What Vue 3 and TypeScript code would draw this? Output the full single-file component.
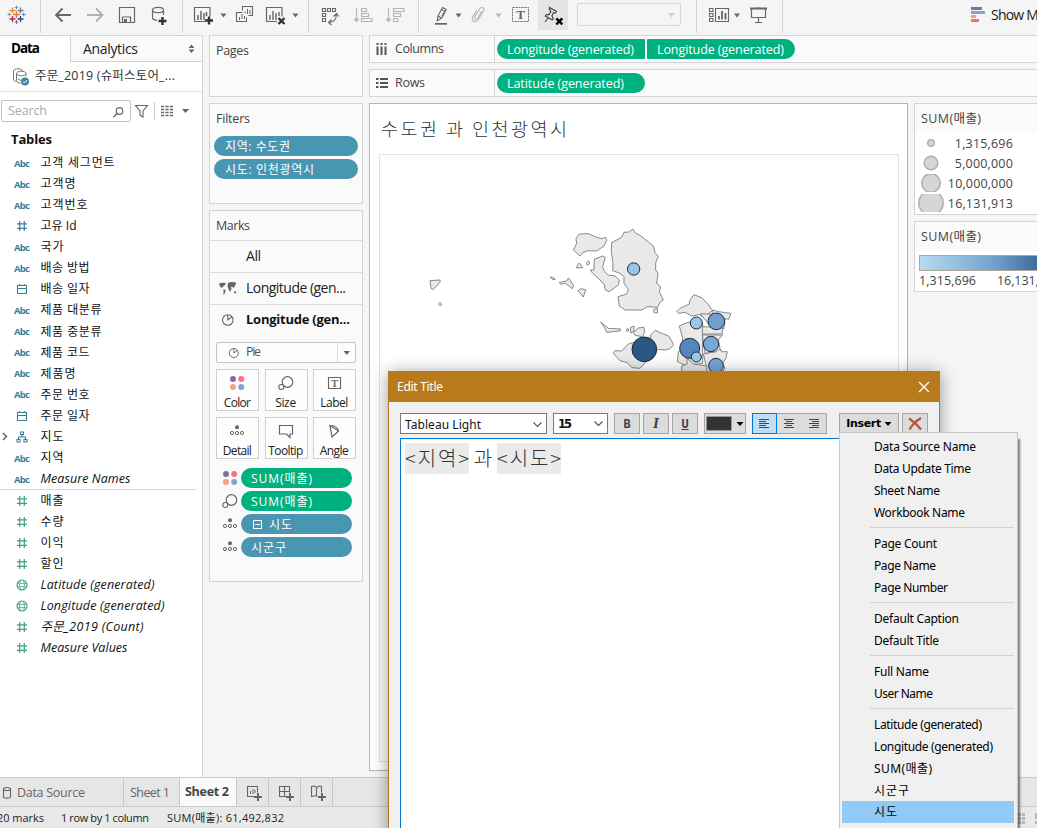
<script setup lang="ts">
import { h } from 'vue'
import type { Directive, FunctionalComponent } from 'vue'

type Shape = { d?: string; f?: string; s?: string; w?: number; dash?: string; c?: number[]; t?: string; at?: number[] }
type Icon = { box: [number, number, number, number]; shapes: Shape[] }

const G = '#666666'
const L = '#b4b4b4'
const caret = (x: number, y: number, f = G): Shape => ({ d: `M${x - 2.5} ${y - 1.5}h6l-3 4z`, f })
const plus = (x: number, y: number, r = 4, s = '#333', w = 2.4): Shape => ({ d: `M${x - r} ${y}h${2 * r}M${x} ${y - r}v${2 * r}`, s, w })
const cross = (x: number, y: number, s = '#333'): Shape => ({ d: `M${x - 3} ${y - 3}l6 6M${x + 3} ${y - 3}l-6 6`, s, w: 2.4 })

const icons: Record<string, Icon> = {
  logo: { box: [0, 0, 40, 33], shapes: [
    plus(16.5, 14.5, 3.5, '#e8762c', 1.4), plus(12.5, 10.5, 3, '#eb912c', 1.3), plus(20.5, 10.5, 3, '#5b879b', 1.3),
    plus(12.5, 19, 3, '#c72035', 1.3), plus(20.5, 19, 3, '#1f4a86', 1.3), plus(16.5, 7.5, 1.8, '#7199a6', 1),
    plus(16.5, 22, 1.8, '#5c6692', 1), plus(9.3, 14.5, 1.8, '#7199a6', 1), plus(23.7, 14.5, 1.8, '#6d79a8', 1)] },
  back: { box: [47, 0, 32, 33], shapes: [{ d: 'M71 15H56M62.5 8.5L56 15l6.5 6.5', s: G, w: 1.8 }] },
  forward: { box: [79, 0, 32, 33], shapes: [{ d: 'M87 15h15M96 8.5l6.5 6.5-6.5 6.5', s: '#b0b0b0', w: 1.8 }] },
  save: { box: [111, 0, 32, 33], shapes: [{ d: 'M119.5 7.5h15v15h-15zM122.5 22v-5h8v5', s: G, w: 1.2 }, { d: 'M124 19h3v4h-3z', f: G }] },
  database: { box: [143, 0, 39, 33], shapes: [{ d: 'M152.5 10c0-3.6 11-3.6 11 0s-11 3.6-11 0v8c0 1.2 2 2.1 4.5 2.3M163.5 10v5', s: G, w: 1.2 }, plus(162.5, 21)] },
  newSheet: { box: [183, 0, 34, 33], shapes: [{ d: 'M205 21.500h-10.500v-14h15.500v9', s: G, w: 1.2 }, { d: 'M198 15v5M201 11v9M204 13v7M206.500 12v4', s: G, w: 1.5 }, plus(209, 20.5)] },
  caretA: { box: [217, 0, 13, 33], shapes: [caret(223, 15)] },
  duplicate: { box: [230, 0, 30, 33], shapes: [{ d: 'M242.500 10.500v-4h10v9h-4M240 12.500h-3.500v9h10v-4M242.500 12.500h-3', s: G, w: 1.1 }, { d: 'M245 11.500v2M247.500 9v5M250 10v4M239.500 17v3M242 14v5M244.500 16v3', s: G, w: 1 }] },
  clear: { box: [260, 0, 30, 33], shapes: [{ d: 'M277 21.500h-10.500v-14h15.500v9', s: G, w: 1.2 }, { d: 'M270 15v5M273 11v9M276 13v7M279 12v4', s: G, w: 1.4 }, cross(281.5, 21)] },
  caretB: { box: [290, 0, 18, 33], shapes: [caret(295, 15)] },
  swap: { box: [309, 0, 36, 33], shapes: [{ d: 'M322.500 8.500h3v3h-3zM327.500 8.500h3v3h-3zM332.500 8.500h3v3h-3zM322.500 13.500h3v3h-3zM322.500 18.500h3v3h-3zM329 22.500q7-.5 7.500-8M333.500 16.500l3-3 2.500 3M331.500 19.500l-3 3 3 2.500', s: G, w: 1.1 }] },
  ascending: { box: [345, 0, 33, 33], shapes: [{ d: 'M356.500 8v12M361.500 8.500h5v3h-5zM361.500 13.500h7v3h-7zM361.500 18.500h10.500v3h-10.500z', s: L, w: 1.1 }, { d: 'M353.500 18.500h6l-3 4z', f: L }] },
  descending: { box: [378, 0, 40, 33], shapes: [{ d: 'M388.500 8v12M393.500 8.500h10.500v3h-10.500zM393.500 13.500h7v3h-7zM393.500 18.500h4.500v3h-4.500z', s: L, w: 1.1 }, { d: 'M385.500 18.500h6l-3 4z', f: L }] },
  pen: { box: [419, 0, 32, 33], shapes: [{ d: 'M438 16l4.500-8.500 3.800 2-4.600 8.700-4.500 2.500zM441.500 9.500l3.800 2M438 16l3.600 2.200M442 16l3-5.500', s: G, w: 1.1 }, { d: 'M435 23h12v1.700h-12z', f: G }] },
  caretC: { box: [451, 0, 15, 33], shapes: [caret(458, 15)] },
  clip: { box: [466, 0, 24, 33], shapes: [{ d: 'M482 11l-4.500 7.500c-1.500 2.200-4 .5-2.800-1.500l4.800-8c2-3 5.500-1 4 2l-5.500 9c-2.500 3.500-7.500 1-5.300-3l4-6.500', s: L, w: 1.1 }] },
  caretD: { box: [490, 0, 17, 33], shapes: [caret(498, 15, L)] },
  textBox: { box: [507, 0, 30, 33], shapes: [{ d: 'M512.500 7.500h16v14h-16z', s: G, w: 1, dash: '2 1' }, { t: 'T', at: [520.500, 19.300, 13], f: G }] },
  pin: { box: [538, 0, 30, 30], shapes: [{ d: 'M549.500 7.500l7 4-1.200 1.500-1.800-.4-1.500 3.200 1.200 3-1 1.200-6.800-4 1-1.500 2.700.1 1.700-3-1.500-2.500zM548.500 17.500l-3.500 4.500', s: '#444', w: 1.2 }, cross(559.3, 21.3, '#000')] },
  combo: { box: [661, 3, 19, 23], shapes: [{ d: 'M668 13h7l-3.500 4.500z', f: '#cfcfcf' }] },
  cards: { box: [697, 0, 35, 33], shapes: [{ d: 'M709.500 8.500h3.500v3h-3.500zM709.500 13.500h3.500v3h-3.500zM709.500 18.500h3.500v3h-3.500zM715.500 8.500h13v13h-13z', s: G, w: 1.1 }, { d: 'M719 16v3.500M722 11v8.500M725.500 13v6.500', s: G, w: 1.8 }] },
  caretE: { box: [732, 0, 12, 33], shapes: [caret(736.5, 15)] },
  present: { box: [744, 0, 38, 33], shapes: [{ d: 'M750 8.500h17', s: G, w: 2 }, { d: 'M751.500 9v8.500h14V9M758.500 18v4.500M755 22.500h7M758.500 7v2', s: G, w: 1.2 }] },
  showMe: { box: [971, 0, 20, 33], shapes: [{ d: 'M971 7h11v3h-11z', f: '#85709b' }, { d: 'M971 11h14v3h-14z', f: '#7fa5cf' }, { d: 'M971 15h5v3h-5z', f: '#f2a479' }, { d: 'M971 19h8v3h-8z', f: '#fb6a7b' }] },

  sorter: { box: [185, 40, 14, 16], shapes: [{ d: 'M189.500 47l3-3.500 3 3.500zM189.500 48.500h6l-3 3.500z', f: G }] },
  source: { box: [12, 66, 20, 20], shapes: [{ d: 'M13.500 70c0-3 9-3 9 0M13.500 70v8c0 1.500 1.500 2.500 3 2.700M16.500 72.500c0-3 9.500-3 9.500 0s-9.500 3-9.500 0v7c0 1.500 1.500 2.500 4 2.500M26 72.500v3M18 78l3 1.500', s: '#777', w: 1 }, { c: [25, 80.500, 4], f: '#3f87a6' }, { d: 'M23 80.500l1.500 1.500 2.600-3', s: '#fff', w: 1 }] },
  search: { box: [112, 103, 16, 16], shapes: [{ c: [119.5, 110, 3.300], s: G, w: 1.2 }, { d: 'M117 112.500l-3.500 3.500', s: G, w: 1.5 }] },
  filter: { box: [133, 102, 18, 18], shapes: [{ d: 'M135.500 105.500h12l-4.500 5.500v6l-3-1.800V111z', s: G, w: 1.1 }] },
  list: { box: [158, 102, 18, 18], shapes: [106.5, 109.5, 112.5, 115.5].map((y) => ({ d: `M160 ${y}h12`, s: G, w: 1.5, dash: '3.200 1.200' })) },
  caretF: { box: [178, 102, 14, 18], shapes: [{ d: 'M183 109h7l-3.500 4z', f: G }] },

  hash: { box: [0, 0, 14, 14], shapes: [{ d: 'M2 4.800h10M2 9.300h10M4.700 2v10M9.300 2v10', s: 'currentColor', w: 1.2 }] },
  calendar: { box: [0, 0, 14, 14], shapes: [{ d: 'M2.500 3.500h9v8h-9zM2.500 6.500h9M4.700 2v2M9.300 2v2', s: 'currentColor', w: 1.1 }] },
  tree: { box: [0, 0, 14, 14], shapes: [{ d: 'M5.500 2h3v2.500h-3zM2 9.500h3v2.500H2zM9 9.500h3v2.500H9zM7 4.500v2.500M3.500 9.500V7h7v2.500', s: 'currentColor', w: 1.1 }] },
  globe: { box: [0, 0, 14, 14], shapes: [{ c: [7, 7, 5], s: 'currentColor', w: 1.1 }, { d: 'M2 5.300h10M2 8.700h10M5.800 2c-1.700 3-1.700 7 0 10M8.200 2c1.700 3 1.700 7 0 10', s: 'currentColor', w: 0.8 }] },

  columns: { box: [375, 41, 14, 14], shapes: [{ d: 'M377.500 42v2M381.500 42v2M385.500 42v2M377.500 45.500V54M381.500 45.500V54M385.500 45.500V54', s: '#555', w: 2 }] },
  rows: { box: [375, 75, 14, 14], shapes: [{ d: 'M376 78h2.500M376 82h2.500M376 86h2.500M380 78h8M380 82h8M380 86h8', s: '#555', w: 1.8 }] },
  map: { box: [218, 279, 20, 18], shapes: [{ d: 'M219 283.500l3-.8 4 .3-1 2-2 1.500-1 1.500-2-1.500zM223.500 289l2 1-.5 3-1.500 2zM228 283l3-1 5 .5-.5 2.500-2 3-1.500-1.500-1 .5.500 2-1.500 3-1.500-3-1-2.500zM234.500 291l2 1-1 1.500-1.500-.5z', f: '#666' }] },
  pie: { box: [221, 313, 14, 14], shapes: [{ c: [227.8, 320, 5.300], s: G, w: 1.1 }, { d: 'M227.800 314.700v5.300l4-3', s: G, w: 1.1 }] },
  color: { box: [228, 374, 18, 18], shapes: [{ c: [233, 379, 3], f: '#83709c' }, { c: [241.2, 379, 3], f: '#fa7284' }, { c: [233, 387, 3], f: '#f2a379' }, { c: [241.2, 387, 3], f: '#82a5cf' }] },
  size: { box: [277, 374, 18, 18], shapes: [{ c: [287.500, 382, 5.300], s: G, w: 1.2 }, { c: [281.300, 387, 2.500], s: G, w: 1.1, f: '#fafafa' }] },
  label: { box: [324, 374, 18, 18], shapes: [{ d: 'M327.500 377.500h12v11h-12z', s: G, w: 1.1 }, { t: 'T', at: [333.500, 386.500, 10], f: G }] },
  detail: { box: [228, 423, 18, 18], shapes: [{ c: [237, 428.300, 2], f: G }, { c: [232, 434, 1.600], s: G, w: 1 }, { c: [237, 434, 1.600], s: G, w: 1 }, { c: [242, 434, 1.600], s: G, w: 1 }] },
  tooltip: { box: [277, 422, 18, 18], shapes: [{ d: 'M279.500 425.500h13v8.500h-2.500v3.500l-3.500-3.500h-7z', s: G, w: 1.2 }] },
  angle: { box: [325, 421, 18, 18], shapes: [{ d: 'M330 424.500l2 11.500 6.500-6zM330 424.500c4 0 7.500 2 8.500 5.500', s: G, w: 1.2 }] },
  caretG: { box: [338, 343, 17, 19], shapes: [{ d: 'M343.500 351h6.500l-3.200 4z', f: G }] },

  dsource: { box: [1, 785, 12, 14], shapes: [{ d: 'M3.500 788c0-2 7-2 7 0s-7 2-7 0v8c0 1.500 7 1.500 7 0v-8', s: G, w: 1.1 }] },
  addSheet: { box: [236, 778, 31, 28], shapes: [{ d: 'M254 796.500h-7.500v-10h10v6', s: G, w: 1.1 }, { d: 'M249.500 791v3M252 789v5M254 790v3', s: G, w: 1 }, plus(257, 797, 4, G, 2)] },
  addDash: { box: [268, 778, 31, 28], shapes: [{ d: 'M285 796.500h-6.500v-10h10v6M278.500 791.500h10M283.500 786.500v10', s: G, w: 1.1 }, plus(289, 797, 4, G, 2)] },
  addStory: { box: [300, 778, 31, 28], shapes: [{ d: 'M316 796.500l-1-1-4.500 1v-10l3-.5 2 1.500v8.500M315.500 787.500l2.500-1.500 2.500.5v6', s: G, w: 1.1 }, plus(321, 797, 4, G, 2)] },

  close: { box: [914, 376, 20, 20], shapes: [{ d: 'M919 381l10 10M929 381l-10 10', s: '#fff', w: 1.3 }] },
  chevron: { box: [0, 0, 12, 10], shapes: [{ d: 'M1.500 2.500l4 4 4-4', s: '#555', w: 1.2 }] },
  blackCaret: { box: [0, 0, 8, 6], shapes: [{ d: 'M.5 1h7L4 5z', f: '#000' }] },
  alignLeft: { box: [0, 0, 12, 12], shapes: [{ d: 'M1 1.500h10M1 3.500h7M1 5.500h10M1 7.500h7M1 9.500h10', s: '#3d4752', w: 1 }] },
  alignCenter: { box: [0, 0, 12, 12], shapes: [{ d: 'M1 1.500h10M3 3.500h6M1 5.500h10M3 7.500h6M1 9.500h10', s: '#3d4752', w: 1 }] },
  alignRight: { box: [0, 0, 12, 12], shapes: [{ d: 'M1 1.500h10M4 3.500h7M1 5.500h10M4 7.500h7M1 9.500h10', s: '#3d4752', w: 1 }] },
  remove: { box: [0, 0, 16, 14], shapes: [{ d: 'M2 1.500c5 3 9 7 12 11M14 1C9 4 5 8 2.500 12.500', s: '#b8533a', w: 2.2 }] },
}

/* Renders one glyph; every icon keeps its own drawing window. */
const Glyph: FunctionalComponent<{ name: string }> = ({ name }) => {
  const { box, shapes } = icons[name]
  return h('svg', { width: box[2], height: box[3], viewBox: box.join(' ') }, shapes.map((p) => {
    const paint = { fill: p.f ?? 'none', stroke: p.s ?? 'none', 'stroke-width': p.w, 'stroke-dasharray': p.dash }
    if (p.c) return h('circle', { cx: p.c[0], cy: p.c[1], r: p.c[2], ...paint })
    if (p.t && p.at) return h('text', { x: p.at[0], y: p.at[1], 'font-size': p.at[2], 'font-weight': 700, 'font-family': 'Liberation Serif, serif', 'text-anchor': 'middle', fill: p.f }, p.t)
    return h('path', { d: p.d, ...paint })
  }))
}
Glyph.props = ['name']

/* Tracks a label out (or in) so that it fills the given width. */
const vFit: Directive<HTMLElement, number> = {
  mounted(el, { value }) {
    const range = document.createRange()
    range.selectNodeContents(el)
    const natural = range.getBoundingClientRect().width
    const count = Math.max((el.textContent ?? '').length - 1, 1)
    el.style.letterSpacing = `${(value - natural) / count}px`
  },
}

const toolbar: string[][] = [
  ['logo'],
  ['back', 'forward', 'save', 'database'],
  ['newSheet', 'caretA', 'duplicate', 'clear', 'caretB'],
  ['swap', 'ascending', 'descending'],
]

type Field = [icon: string, name: string, width: number, italic?: boolean]
const dimensions: Field[] = [
  ['Abc', '고객 세그먼트', 74], ['Abc', '고객명', 35], ['Abc', '고객번호', 47], ['hash', '고유 Id', 36],
  ['Abc', '국가', 23], ['Abc', '배송 방법', 49], ['calendar', '배송 일자', 49], ['Abc', '제품 대분류', 61],
  ['Abc', '제품 중분류', 61], ['Abc', '제품 코드', 49], ['Abc', '제품명', 35], ['Abc', '주문 번호', 49],
  ['calendar', '주문 일자', 49], ['tree', '지도', 23], ['Abc', '지역', 23], ['Abc', 'Measure Names', 90, true],
]
const measures: Field[] = [
  ['hash', '매출', 23], ['hash', '수량', 23], ['hash', '이익', 23], ['hash', '할인', 23],
  ['globe', 'Latitude (generated)', 114, true], ['globe', 'Longitude (generated)', 124, true],
  ['hash', '주문_2019 (Count)', 103, true], ['hash', 'Measure Values', 87, true],
]

const markButtons: [string, string, number][] = [
  ['color', 'Color', 27], ['size', 'Size', 21], ['label', 'Label', 28],
  ['detail', 'Detail', 29], ['tooltip', 'Tooltip', 35], ['angle', 'Angle', 29],
]
const markPills = [
  { icon: 'color', text: 'SUM(매출)', width: 61, kind: 'green' },
  { icon: 'size', text: 'SUM(매출)', width: 61, kind: 'green' },
  { icon: 'detail', text: '시도', width: 23, kind: 'blue', box: true },
  { icon: 'detail', text: '시군구', width: 35, kind: 'blue' },
]

const sizes: [string, number, number][] = [['1,315,696', 3.3, 58], ['5,000,000', 6.8, 58], ['10,000,000', 9.3, 65], ['16,131,913', 12.2, 65]]

const menu: [string, number][][] = [
  [['Data Source Name', 102], ['Data Update Time', 97], ['Sheet Name', 66], ['Workbook Name', 91]],
  [['Page Count', 63], ['Page Name', 62], ['Page Number', 74]],
  [['Default Caption', 85], ['Default Title', 65]],
  [['Full Name', 55], ['User Name', 59]],
  [['Latitude (generated)', 108], ['Longitude (generated)', 119], ['SUM(매출)', 58], ['시군구', 35], ['시도', 23]],
]

const regions = [
  'M460 90l10-20-2-15 10-13 27-1 20 9 20 6 12-4 3 10-8 16-22 15-25-1-17 6-8 10z',
  'M575 68l30-16 7-15 16-1 10-9 7 11 15 8 40 32 5 20 10 12-8 18v22l7 10-4 30 12 10-4 15 12 25-8 5-10 17-30-2-17 10h-50l-17-12-4-28 26-8 5-14-13-18v-20l-12-10-22-8 1-22-5-35z',
  'M523 118l25-10 8 4-8 28 4 12 13 13 20 3 13 12-3 15-27 20-12-5-4-18-17-17-17-15-7-10h11z',
  'M472 136l6-7 10 14-18 1z', 'M500 128l6-6 3 9-8 5z', 'M30 182l31-2-2 8-20 21-6-4z', 'M55 252l5-5 5 5-4 6z',
  'M391 171l9 2 6 5-8 1z', 'M418 187l22-4 6-9 15 23-4 9-21-16-14 3z', 'M474 212l8-6 15 3-7 22z', 'M700 270l12-6 1 15h-10z',
  'M542 306l23 19 37 2-2 6-40 4-5-12z', 'M618 330l6-5 3 6-6 4z', 'M632 322l10-4v16l-10 5z', 'M640 338l15-14 17-2 2 12-6 16-23-4z',
  'M692 345l14-14 14 7 26 10 15 26-11 12-15 4-20-2-25 22-18 22-12 13-25-2-13-15-22-6-20-22 5-8 20 1 20-21 25-7 42-10z',
  'M770 275l10-10 28-13 2-12 12-16 23 9 17 17 16 22-28 20-12-8-23 4-20-11-19 3z',
  'M778 318l17-8 20-5 33 5v120l-48 8-28-13 3-30 13-10-1-35z',
  'M841 281l34 2 5-13 15 5 38 5-7 18-11-2-3 30-32 4-20-25z',
  'M847 320l60 3v19h-60z', 'M847 345h60l-12 15 5 25 5 10-50 5z',
  'M850 402l40-7 8-8 8 8h16l-4 20-10 15 7 15-10 15h-55l8-25z', 'M785 438l17-6-2-18 20 18 40 6v35h-75z',
]
const bubbles: [number, number, number, string][] = [
  [641, 147, 18.5, '#98c5e8'], [829, 309, 18, '#98c7e7'], [889, 304, 25, '#709fcb'], [873, 372, 23, '#78a8d3'],
  [809, 385, 30, '#5585b9'], [829, 411, 15, '#9ccae9'], [888, 437, 22, '#78a8d3'], [673, 388, 37, '#2b5785'],
]
</script>

<template>
  <div class="app">
    <header class="toolbar">
      <div v-for="(group, i) in toolbar" :key="i" class="group" :class="{ lead: i === 1 }">
        <Glyph v-for="name in group" :key="name" :name="name" />
      </div>
      <div class="group edit">
        <Glyph name="pen" /><Glyph name="caretC" /><Glyph name="clip" /><Glyph name="caretD" /><Glyph name="textBox" />
        <span class="active"><Glyph name="pin" /></span>
        <span class="combo"><Glyph name="combo" /></span>
      </div>
      <div class="group"><Glyph name="cards" /><Glyph name="caretE" /><Glyph name="present" /></div>
      <div class="show-me"><Glyph name="showMe" /><span v-fit="55">Show Me</span></div>
    </header>

    <main class="workspace">
      <aside class="data">
        <div class="data-tabs">
          <div class="tab-on"><b v-fit="29">Data</b></div>
          <div class="tab-off"><span v-fit="55">Analytics</span><Glyph name="sorter" /></div>
        </div>
        <div class="source"><Glyph name="source" /><span v-fit="140">주문_2019 (슈퍼스토어_...</span></div>
        <div class="find">
          <div class="search"><span v-fit="39">Search</span><Glyph name="search" /></div>
          <Glyph name="filter" /><i class="bar"></i><Glyph name="list" /><Glyph name="caretF" />
        </div>
        <h3><span v-fit="41">Tables</span></h3>
        <ul class="fields dims">
          <li v-for="[icon, name, width, italic] in dimensions" :key="name">
            <span class="expand"><svg v-if="icon === 'tree'" width="6" height="9" viewBox="0 0 6 9"><path d="M1 1l3.500 3.500L1 8" fill="none" stroke="#555" stroke-width="1.300" /></svg></span>
            <span class="kind"><b v-if="icon === 'Abc'" v-fit="16">Abc</b><Glyph v-else :name="icon" /></span>
            <span v-fit="width" :class="{ italic }">{{ name }}</span>
          </li>
        </ul>
        <ul class="fields meas">
          <li v-for="[icon, name, width, italic] in measures" :key="name">
            <span class="expand"></span>
            <span class="kind"><Glyph :name="icon" /></span>
            <span v-fit="width" :class="{ italic }">{{ name }}</span>
          </li>
        </ul>
      </aside>

      <section class="cards">
        <div class="card pages"><h4><span v-fit="33">Pages</span></h4></div>
        <div class="card filters">
          <h4><span v-fit="34">Filters</span></h4>
          <div class="pill blue"><span v-fit="65">지역: 수도권</span></div>
          <div class="pill blue"><span v-fit="89">시도: 인천광역시</span></div>
        </div>
        <div class="card marks">
          <h4><span v-fit="34">Marks</span></h4>
          <div class="layer"><span class="slot"></span><span v-fit="15">All</span></div>
          <div class="layer"><span class="slot"><Glyph name="map" /></span><span v-fit="100">Longitude (gen...</span></div>
          <div class="layer bold"><span class="slot"><Glyph name="pie" /></span><span v-fit="104">Longitude (gen...</span></div>
          <div class="select"><span class="mini"><Glyph name="pie" /></span><span v-fit="15">Pie</span><i><Glyph name="caretG" /></i></div>
          <div class="buttons">
            <div v-for="[icon, text, width] in markButtons" :key="text"><Glyph :name="icon" /><span v-fit="width">{{ text }}</span></div>
          </div>
          <div v-for="(p, i) in markPills" :key="i" class="encoding">
            <Glyph :name="p.icon" />
            <div class="pill" :class="p.kind"><i v-if="p.box" class="minus"></i><span v-fit="p.width">{{ p.text }}</span></div>
          </div>
        </div>
      </section>

      <section class="sheet">
        <div class="shelf">
          <div class="shelf-name"><Glyph name="columns" /><span v-fit="49">Columns</span></div>
          <div class="pill green first"><span v-fit="127">Longitude (generated)</span></div>
          <div class="pill green last"><span v-fit="127">Longitude (generated)</span></div>
        </div>
        <div class="shelf">
          <div class="shelf-name"><Glyph name="rows" /><span v-fit="30">Rows</span></div>
          <div class="pill green"><span v-fit="117">Latitude (generated)</span></div>
        </div>
        <div class="canvas-row">
          <div class="view">
            <h1><span v-fit="186">수도권 과 인천광역시</span></h1>
            <div class="plot">
              <svg width="518" height="606" viewBox="380 155 518 606">
                <g transform="translate(420 220) scale(.33333)">
                  <path v-for="(d, i) in regions" :key="i" :d="d" fill="#e9e9e9" stroke="#777" stroke-width="2.600" stroke-linejoin="round" />
                  <circle v-for="([x, y, r, c], i) in bubbles" :key="i" :cx="x" :cy="y" :r="r" :fill="c" stroke="#1d2a38" stroke-width="3" />
                </g>
              </svg>
            </div>
          </div>
          <div class="legends">
            <div class="legend">
              <h4><span v-fit="60">SUM(매출)</span></h4>
              <div v-for="[text, r, width] in sizes" :key="text" class="size-row">
                <svg width="32" height="18" viewBox="0 0 32 18"><circle cx="16" cy="9" :r="r" fill="#d6d6d6" stroke="#b0b0b0" stroke-width="1.500" /></svg>
                <span v-fit="width">{{ text }}</span>
              </div>
            </div>
            <div class="legend ramp">
              <h4><span v-fit="60">SUM(매출)</span></h4>
              <div class="gradient"></div>
              <div class="ends"><span v-fit="57">1,315,696</span><span v-fit="63">16,131,913</span></div>
            </div>
          </div>
        </div>
      </section>
    </main>

    <nav class="sheet-tabs">
      <div class="t-source"><Glyph name="dsource" /><span v-fit="68">Data Source</span></div>
      <div class="t-one"><span v-fit="40">Sheet 1</span></div>
      <div class="t-two"><b v-fit="44">Sheet 2</b></div>
      <div><Glyph name="addSheet" /></div><div><Glyph name="addDash" /></div><div><Glyph name="addStory" /></div>
    </nav>
    <footer class="status">
      <span class="s1"><span v-fit="47">20 marks</span></span>
      <span class="s2"><span v-fit="88">1 row by 1 column</span></span>
      <span class="s3"><span v-fit="117">SUM(매출): 61,492,832</span></span>
      <svg class="dots" width="19" height="12" viewBox="0 0 19 12"><path d="M0 1h3v3H0zM4 1h3v3H4zM0 5h3v3H0zM4 5h3v3H4zM0 9h3v3H0zM4 9h3v3H4zM17 1h2v6h-2zM17 9h2v3h-2z" fill="#b8b8b8" /></svg>
    </footer>

    <div class="dialog">
      <div class="dialog-title"><span v-fit="46">Edit Title</span><Glyph name="close" /></div>
      <div class="format">
        <div class="field font"><span v-fit="76">Tableau Light</span><Glyph name="chevron" /></div>
        <div class="field points"><b v-fit="14">15</b><Glyph name="chevron" /></div>
        <div class="btn b"><b>B</b></div>
        <div class="btn i"><b>I</b></div>
        <div class="btn u"><b>U</b></div>
        <div class="btn swatch"><i></i><Glyph name="blackCaret" /></div>
        <div class="align"><div class="on"><Glyph name="alignLeft" /></div><div><Glyph name="alignCenter" /></div><div><Glyph name="alignRight" /></div></div>
        <div class="btn insert"><b v-fit="35">Insert</b><Glyph name="blackCaret" /></div>
        <div class="btn wipe"><Glyph name="remove" /></div>
      </div>
      <div class="editor">
        <span class="token"><span v-fit="64">&lt;지역&gt;</span></span><span class="word">과</span><span class="token"><span v-fit="64">&lt;시도&gt;</span></span>
      </div>
    </div>

    <div class="menu">
      <div v-for="(section, i) in menu" :key="i" class="section">
        <div v-for="[text, width] in section" :key="text" class="entry" :class="{ chosen: text === '시도' }"><span v-fit="width">{{ text }}</span></div>
      </div>
    </div>
  </div>
</template>

<style>
body { margin: 0; }
</style>

<style scoped>
* { box-sizing: border-box; }
.app {
  position: relative; width: 1037px; height: 828px; overflow: hidden; display: flex; flex-direction: column;
  background: #f5f5f5; color: #222; white-space: nowrap;
  font: 12.5px/1 "Open Sans", "Noto Sans CJK KR", sans-serif;
}
svg { display: block; flex: none; }
h1, h3, h4, ul { margin: 0; padding: 0; font-weight: 400; }
i { font-style: normal; }

.toolbar { display: flex; height: 35px; flex: none; }
.group { display: flex; flex: none; height: 33px; border-right: 1px solid #d2d2d2; }
.lead { padding-left: 6px; }
.group:first-child { width: 41px; }
.edit { width: 278px; }
.active { height: 30px; margin-left: 1px; background: #e5e5e5; }
.combo { width: 104px; height: 23px; margin: 3px 0 0 9px; border: 1px solid #d6d6d6; border-radius: 2px; display: flex; justify-content: flex-end; align-items: center; }
.show-me { flex: none; margin-left: 188px; display: flex; font-size: 14px; line-height: 29px; }

.workspace { display: flex; height: 742px; flex: none; }
.data { width: 203px; background: #fff; border-top: 1px solid #d4d4d4; border-right: 1px solid #d4d4d4; flex: none; }
.data-tabs { display: flex; height: 26px; font-size: 14px; line-height: 25px; }
.tab-on { width: 70px; padding-left: 11px; color: #000; font-size: 13.5px; }
.tab-off { flex: 1; background: #fafafa; border-left: 1px solid #d4d4d4; border-bottom: 1px solid #d4d4d4; display: flex; justify-content: space-between; align-items: center; padding: 0 4px 0 12px; line-height: 23px; }
.source { height: 30px; border-bottom: 1px solid #e2e2e2; display: flex; align-items: center; padding-left: 12px; gap: 3px; color: #333; }
.find { display: flex; align-items: center; height: 22px; margin: 8px 0 0 1px; }
.search { width: 130px; height: 22px; border: 1px solid #c2c2c2; border-radius: 2px; display: flex; justify-content: space-between; align-items: center; padding: 1px 2px 0 6px; color: #aaa; margin-right: 2px; font-size: 12.5px; }
.bar { width: 1px; height: 18px; background: #d0d0d0; margin: 0 4px 0 3px; }
.data h3 { font-weight: 700; font-size: 13px; line-height: 34px; height: 30px; padding-left: 11px; color: #111; }
.fields { list-style: none; color: #111; }
.fields li { display: flex; align-items: center; height: 21.07px; font-size: 12px; padding-top: 1px; }
.expand { width: 14px; display: flex; padding-left: 2px; }
.kind { width: 26.500px; display: flex; color: #3a7f98; font-size: 9.5px; padding-top: 1px; }
.kind svg { margin: -1px 0 0 1px; }
.italic { font-style: italic; font-size: 12.500px; }
.meas { margin: 0 6px 0 0; }
.dims { border-bottom: 1px solid #d8d8d8; height: 338px; margin-right: 6px; }
.meas .kind { color: #3fa278; }

.cards { width: 154px; margin-left: 6px; flex: none; display: flex; flex-direction: column; gap: 6px; }
.card { background: #fafafa; border: 1px solid #d4d4d4; color: #444; }
.card h4, .legend h4 { height: 29px; line-height: 30px; padding-left: 6px; font-size: 12.500px; color: #444; }
.pages { height: 62px; }
.filters { height: 101px; }
.marks { height: 372px; }
.pill { height: 20px; border-radius: 10px; color: #fff; line-height: 19px; font-size: 12.500px; display: flex; align-items: center; padding-left: 10px; }
.green { background: #00b180; }
.blue { background: #4996b2; }
.filters .pill { margin: 0 4px 3px; font-size: 12px; padding-left: 11px; }
.filters h4 { height: 32px; }
.layer { height: 32px; border-top: 1px solid #dcdcdc; display: flex; align-items: center; font-size: 14px; color: #222; padding-bottom: 1px; }
.layer.bold { font-weight: 700; color: #111; font-size: 13px; padding-bottom: 2px; }
.slot { width: 36px; display: flex; justify-content: center; }
.select { margin: 6px 6px 0; height: 21px; border: 1px solid #c4c4c4; border-radius: 2px; display: flex; align-items: center; color: #555; background: #fdfdfd; }
.mini { width: 29px; padding-left: 11px; }
.mini svg { width: 12px; height: 12px; }
.select i { margin-left: auto; border-left: 1px solid #dcdcdc; }
.buttons { margin: 6px 6px 9px; display: grid; grid-template-columns: 43px 43px 43px; justify-content: space-between; row-gap: 6px; }
.buttons div { height: 42px; border: 1px solid #d0d0d0; background: #fdfdfd; display: flex; flex-direction: column; align-items: center; padding: 4px 1px 0 0; gap: 5px; font-size: 12px; color: #222; }
.encoding { display: flex; align-items: center; height: 20px; margin-bottom: 3px; padding-left: 11px; gap: 2px; }
.encoding .pill { width: 111px; font-size: 12px; }
.minus { width: 9px; height: 9px; border: 1px solid #fff; margin: 0 7px 0 2px; display: flex; align-items: center; justify-content: center; }
.minus::after { content: ""; width: 5px; height: 1px; background: #fff; }

.sheet { margin-left: 6px; width: 690px; flex: none; display: flex; flex-direction: column; gap: 6px; }
.shelf { height: 28px; flex: none; background: #fafafa; border: 1px solid #d4d4d4; display: flex; align-items: center; }
.shelf-name { width: 125px; height: 26px; border-right: 1px solid #d4d4d4; margin-right: 2px; padding-left: 5px; display: flex; align-items: center; gap: 6px; color: #444; }
.shelf .pill { width: 148px; }
.first { border-radius: 10px 1px 1px 10px; margin-right: 2px; }
.last { border-radius: 1px 10px 10px 1px; }
.canvas-row { display: flex; gap: 6px; height: 668px; }
.view { width: 539px; height: 668px; background: #fff; border: 1px solid #b4b4b4; padding: 0 9px; }
.view h1 { height: 50px; font: 300 18.500px/48px "Noto Sans CJK KR", sans-serif; padding-left: 2px; color: #333; }
.plot { width: 520px; height: 608px; border: 1px solid #e3e3e3; }
.legends { width: 180px; flex: none; display: flex; flex-direction: column; gap: 6px; }
.legend { height: 112px; background: #fff; border: 1px solid #d4d4d4; color: #444; }
.legend h4 { background: #fafafa; }
.size-row { display: flex; align-items: center; height: 20px; width: 98px; justify-content: space-between; }
.size-row span { padding-top: 2px; }
.ramp { height: 71px; }
.gradient { height: 16px; margin: 4px 4px 0; border: 1px solid #aaa79d; background: linear-gradient(90deg, #b5dbf1, #78a8d2 40%, #3f6f9f 69%, #2a5783); }
.ends { display: flex; gap: 21px; padding: 4px 0 0 4px; font-size: 12.500px; }

.sheet-tabs { display: flex; height: 30px; flex: none; background: #e6e6e6; border-top: 1px solid #c9c9c9; border-bottom: 1px solid #c9c9c9; color: #666; }
.sheet-tabs div { border-right: 1px solid #c9c9c9; display: flex; align-items: center; }
.sheet-tabs .t-source { width: 124px; gap: 4px; padding: 2px 0 0 1px; }
.sheet-tabs .t-one { width: 56px; padding: 2px 0 0 6px; }
.sheet-tabs .t-two { width: 57px; padding: 0 0 0 5px; background: #fafafa; color: #444; }
.status { display: flex; align-items: center; flex: 1; background: #e9e9e9; color: #222; font-size: 11px; }
.s1 { width: 64px; margin-left: -3px; }
.s2 { width: 106px; }
.s3 { width: 851px; }

.dialog {
  position: absolute; left: 388px; top: 371px; width: 552px; height: 500px; background: #f0f0f0;
  border: 1px solid #b97a1b; box-shadow: 0 2px 16px rgba(0, 0, 0, .4);
  font-family: "Noto Sans", "Noto Sans CJK KR", sans-serif;
}
.dialog-title { height: 30px; background: #b97a1b; color: #fff; display: flex; justify-content: space-between; align-items: center; padding: 0 5px 0 8px; font-size: 12px; }
.format { display: flex; height: 21px; margin: 11px 0 4px 11px; }
.field { background: #fff; border: 1px solid #7a7a7a; display: flex; align-items: center; justify-content: space-between; color: #111; padding: 0 2px 0 4px; }
.font { width: 147px; margin-right: 6px; font-size: 12px; padding-top: 2px; }
.points { width: 55px; margin-right: 6px; font: 700 11.500px "DejaVu Sans", sans-serif; }
.btn { width: 26px; height: 21px; background: #dcdcdc; border: 1px solid #a5a5a5; display: flex; align-items: center; justify-content: center; margin-right: 3px; color: #3b4350; font: 700 12px "DejaVu Sans Mono", monospace; }
.btn.i { font-family: "DejaVu Serif", serif; font-style: italic; }
.btn.u { text-decoration: underline; margin-right: 6px; }
.btn.swatch { width: 42px; margin-right: 6px; gap: 4px; }
.swatch i { width: 26px; height: 15px; background: #333; border: 1px solid #999; }
.align { display: flex; border: 1px solid #a5a5a5; background: #dcdcdc; width: 75px; height: 21px; margin-right: 12px; }
.align div { width: 25px; display: flex; align-items: center; justify-content: center; }
.align .on { border: 1px solid #0078d7; background: #c0def5; margin: -1px 0 -1px -1px; }
.btn.insert { width: 60px; gap: 3px; color: #000; font: 700 11px "DejaVu Sans", sans-serif; }
.editor { margin-left: 11px; width: 528px; height: 440px; background: #fff; border: 1px solid #0078d7; display: flex; padding: 4px; font: 300 20px/29px "Noto Sans CJK KR", sans-serif; color: #333; }
.token { width: 64px; height: 31px; background: #eaeaea; }
.word { width: 28px; text-align: center; }

.menu {
  position: absolute; left: 839px; top: 432px; width: 179px; height: 420px; background: #f0f0f0; border: 1px solid #c8c8c8;
  box-shadow: 3px 6px 2px -1px rgba(0, 0, 0, .5); padding: 3px 3px 0 2px; font: 12px/21px "Noto Sans", "Noto Sans CJK KR", sans-serif; color: #000;
}
.section + .section { margin-top: 9px; position: relative; }
.section + .section::before { content: ""; position: absolute; left: 28px; right: 0; top: -6px; height: 1px; background: #d4d4d4; }
.entry { height: 22px; padding-left: 32px; }
.chosen { background: #91c9f7; margin-top: -1px; }
</style>
